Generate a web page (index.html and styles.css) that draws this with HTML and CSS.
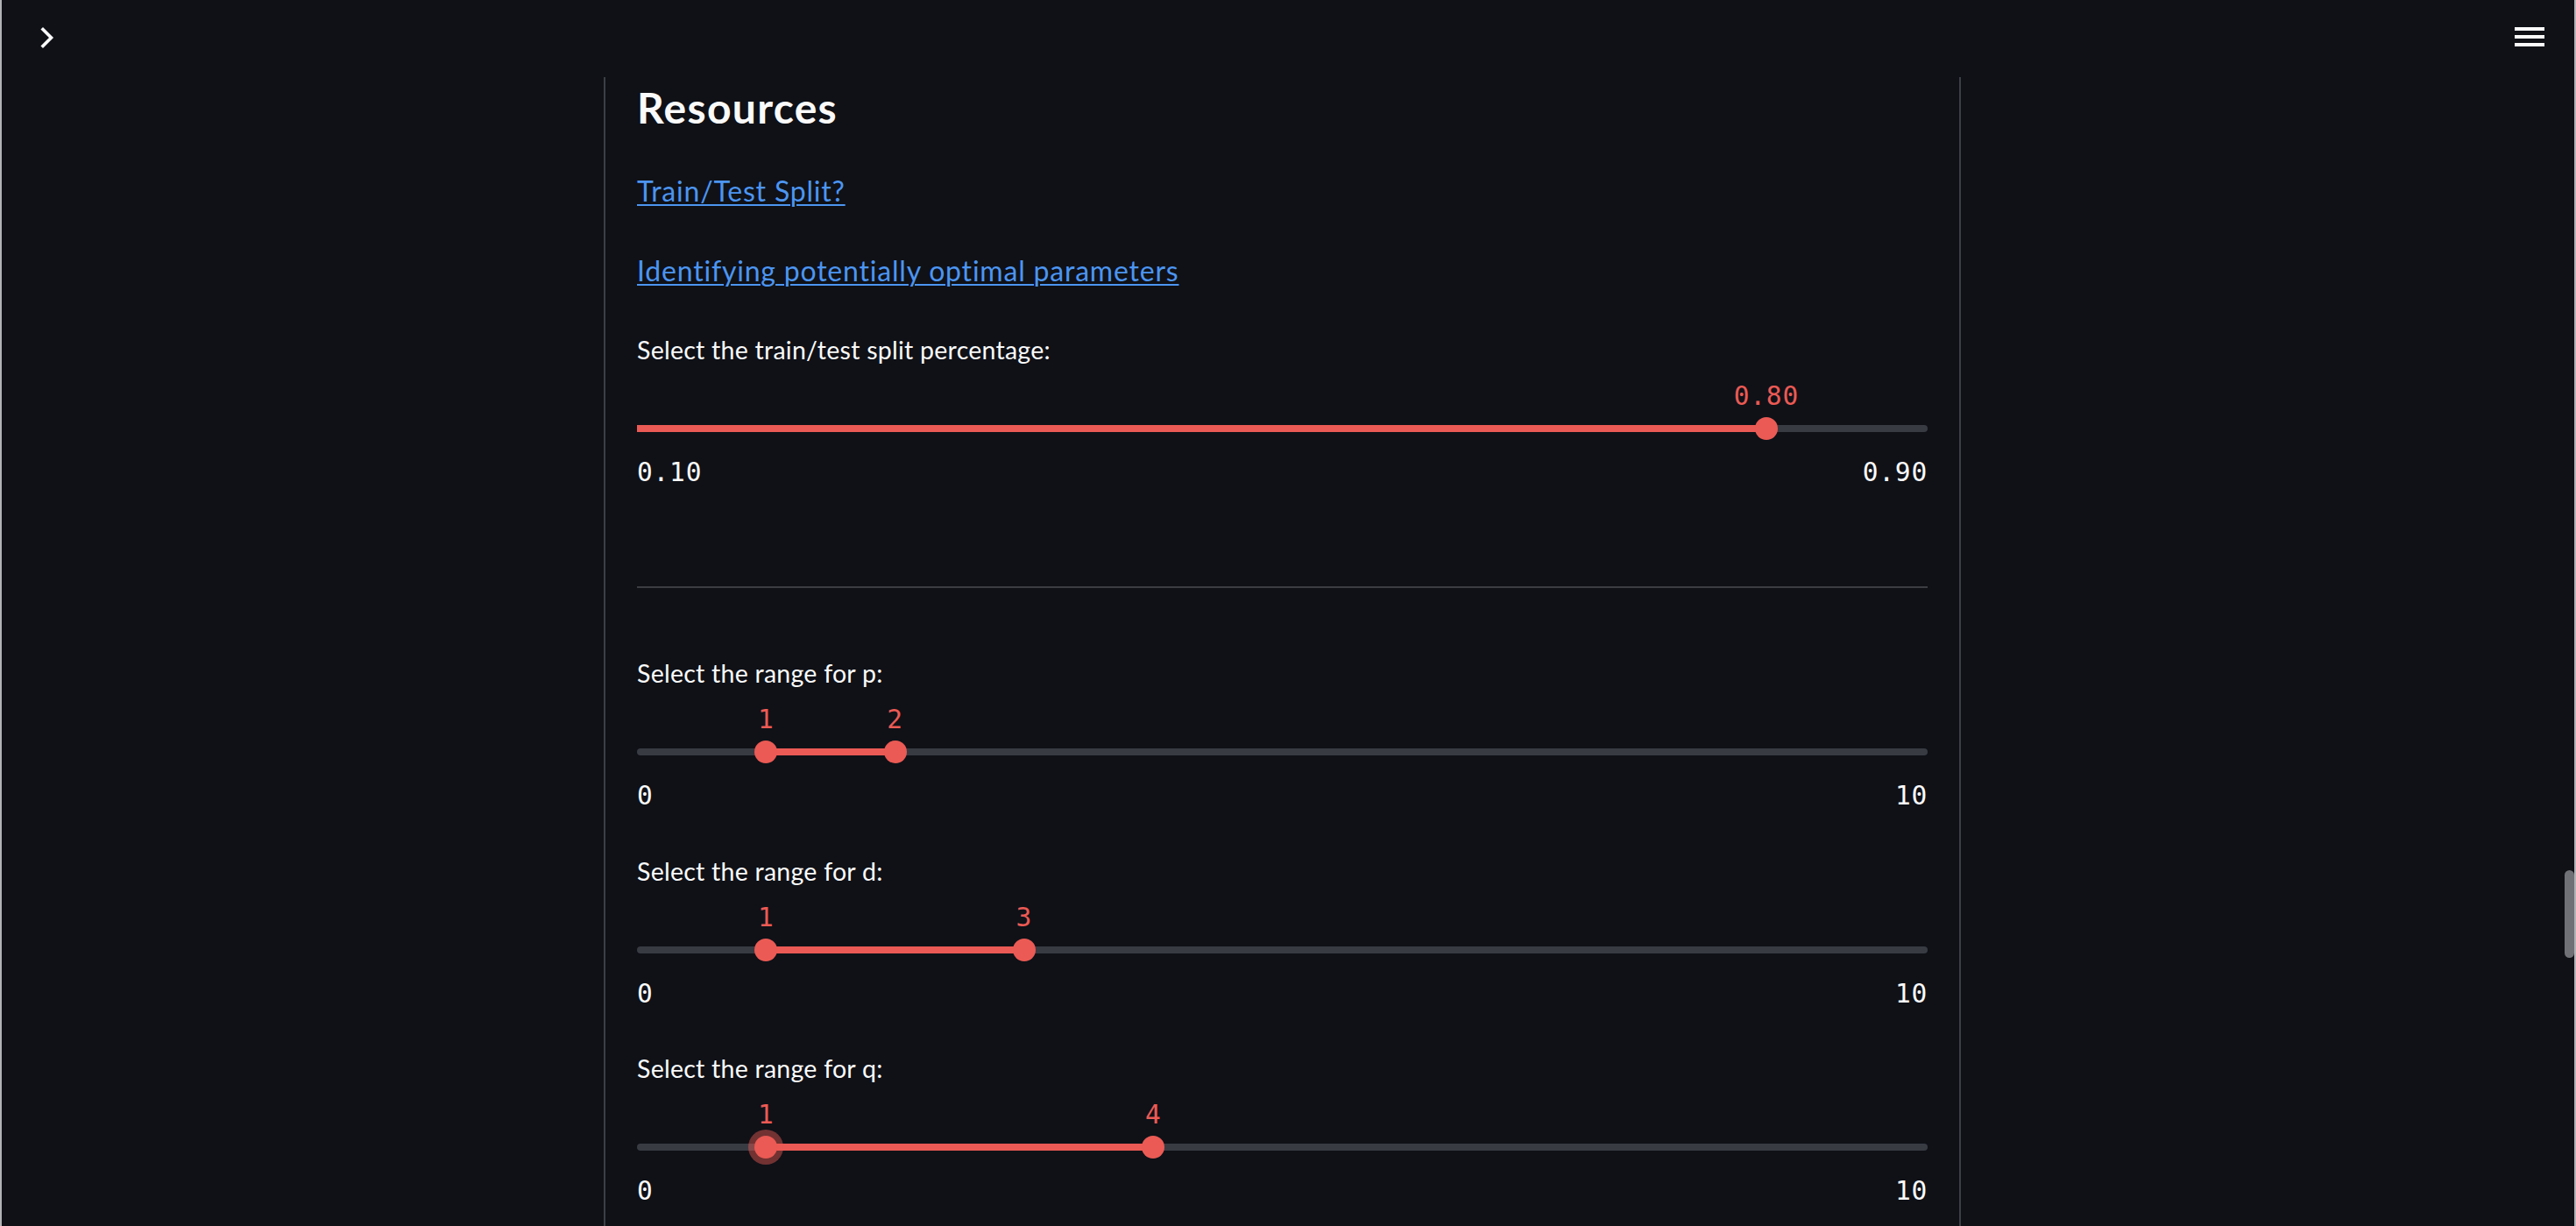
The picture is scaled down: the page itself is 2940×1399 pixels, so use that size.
FILE: index.html
```html
<!DOCTYPE html>
<html lang="en">
<head>
<meta charset="utf-8">
<title>Resources</title>
<link rel="stylesheet" href="styles.css">
</head>
<body>
<div class="app">
  <header class="header">
    <button class="icon-btn sidebar-toggle" aria-label="Open sidebar">
      <svg width="24" height="30" viewBox="0 0 24 30"><path d="M7 4.5 L16.5 14 L7 23.5" fill="none" stroke="#fafafa" stroke-width="3.6" stroke-linecap="square" stroke-linejoin="miter"/></svg>
    </button>
    <button class="icon-btn menu-btn" aria-label="Main menu">
      <svg width="34" height="22" viewBox="0 0 34 22"><rect x="0" y="0" width="34" height="4" fill="#fafafa"/><rect x="0" y="9" width="34" height="4" fill="#fafafa"/><rect x="0" y="18" width="34" height="4" fill="#fafafa"/></svg>
    </button>
  </header>

  <main class="column">
    <h3 class="heading">Resources</h3>
    <p class="para first-link"><a href="#" class="link">Train/Test Split?</a></p>
    <p class="para second-link"><a href="#" class="link">Identifying potentially optimal parameters</a></p>

    <section class="widget widget-split">
      <div class="label">Select the train/test split percentage:</div>
      <div class="slider">
        <div class="slider-area">
          <div class="track"><div class="fill" style="left:0%;width:87.5%"></div></div>
          <div class="thumb" style="left:87.5%"><span class="thumb-value">0.80</span></div>
        </div>
        <div class="ticks"><span>0.10</span><span>0.90</span></div>
      </div>
    </section>

    <hr class="divider">

    <section class="widget widget-first">
      <div class="label">Select the range for p:</div>
      <div class="slider">
        <div class="slider-area">
          <div class="track"><div class="fill" style="left:10%;width:10%"></div></div>
          <div class="thumb" style="left:10%"><span class="thumb-value">1</span></div>
          <div class="thumb" style="left:20%"><span class="thumb-value">2</span></div>
        </div>
        <div class="ticks"><span>0</span><span>10</span></div>
      </div>
    </section>

    <section class="widget">
      <div class="label">Select the range for d:</div>
      <div class="slider">
        <div class="slider-area">
          <div class="track"><div class="fill" style="left:10%;width:20%"></div></div>
          <div class="thumb" style="left:10%"><span class="thumb-value">1</span></div>
          <div class="thumb" style="left:30%"><span class="thumb-value">3</span></div>
        </div>
        <div class="ticks"><span>0</span><span>10</span></div>
      </div>
    </section>

    <section class="widget">
      <div class="label">Select the range for q:</div>
      <div class="slider">
        <div class="slider-area">
          <div class="track"><div class="fill" style="left:10%;width:30%"></div></div>
          <div class="thumb thumb-focus" style="left:10%"><span class="thumb-value">1</span></div>
          <div class="thumb" style="left:40%"><span class="thumb-value">4</span></div>
        </div>
        <div class="ticks"><span>0</span><span>10</span></div>
      </div>
    </section>
  </main>

  <div class="scroll-thumb"></div>
</div>
</body>
</html>
```
FILE: styles.css
```css
html, body {
  margin: 0;
  padding: 0;
  height: 100%;
  overflow: hidden;
  background: #0f1117;
}

.app {
  position: relative;
  height: 100vh;
  box-sizing: border-box;
  display: flex;
  justify-content: center;
  align-items: flex-start;
  border-left: 2px solid #b3b3b5;
  border-right: 2px solid #b3b3b5;
  padding-right: 13px;
  background: #0f1117;
  color: #fafafa;
  font-family: Lato, "Noto Sans", sans-serif;
}

/* header overlay */
.header {
  position: absolute;
  top: 0;
  left: 0;
  right: 0;
  height: 80px;
}
.icon-btn {
  position: absolute;
  background: none;
  border: 0;
  padding: 0;
  margin: 0;
  display: block;
  line-height: 0;
}
.sidebar-toggle {
  left: 40px;
  top: 29px;
}
.menu-btn {
  right: 34px;
  top: 31px;
}

/* main column */
.column {
  width: 1549px;
  box-sizing: border-box;
  margin-top: 88px;
  min-height: calc(100vh - 88px);
  border-left: 2px solid #3d3f46;
  border-right: 2px solid #3d3f46;
  padding: 5px 36px 0 36px;
}

.heading {
  margin: 0;
  font-size: 48px;
  line-height: 60px;
  font-weight: 700;
  letter-spacing: 1.3px;
  color: #fafafa;
}

.para {
  margin: 0;
  font-size: 32px;
  line-height: 40px;
  letter-spacing: 0.8px;
}
.first-link { margin-top: 45px; }
.second-link { margin-top: 51px; }

.link {
  color: #4c95f1;
  text-decoration: underline;
  text-decoration-thickness: 2px;
  text-underline-offset: 3px;
}

.label {
  font-size: 28.5px;
  line-height: 36px;
  letter-spacing: 0.25px;
  color: #fafafa;
}

.widget { margin-top: 49.5px; }
.widget-split { margin-top: 52px; }
.widget-first { margin-top: 79px; }

.slider { margin-top: 17px; }

.slider-area {
  position: relative;
  height: 87px;
}

.track {
  position: absolute;
  top: 51px;
  left: 0;
  right: 0;
  height: 8px;
  border-radius: 4px;
  background: #393b43;
}
.fill {
  position: absolute;
  top: 0;
  height: 100%;
  background: #eb5a54;
}

.thumb {
  position: absolute;
  top: 42px;
  width: 26px;
  height: 26px;
  margin-left: -13px;
  border-radius: 50%;
  background: #eb5a54;
}
.thumb-focus {
  box-shadow: 0 0 0 7px rgba(235, 90, 84, 0.45);
}

.thumb-value {
  position: absolute;
  top: -42px;
  left: 50%;
  transform: translateX(-50%);
  font-family: "DejaVu Sans Mono", "Liberation Mono", monospace;
  font-size: 29.5px;
  line-height: 36px;
  letter-spacing: 0.8px;
  white-space: nowrap;
  color: #eb5a54;
}

.ticks {
  display: flex;
  justify-content: space-between;
  font-family: "DejaVu Sans Mono", "Liberation Mono", monospace;
  font-size: 29.5px;
  line-height: 36px;
  letter-spacing: 0.8px;
  color: #fafafa;
}

.divider {
  margin: 112px 0 0 0;
  border: 0;
  height: 2px;
  background: #3b3d43;
}

.scroll-thumb {
  position: absolute;
  right: 0;
  top: 993px;
  width: 11px;
  height: 100px;
  border-radius: 6px;
  background: #707176;
}
```
